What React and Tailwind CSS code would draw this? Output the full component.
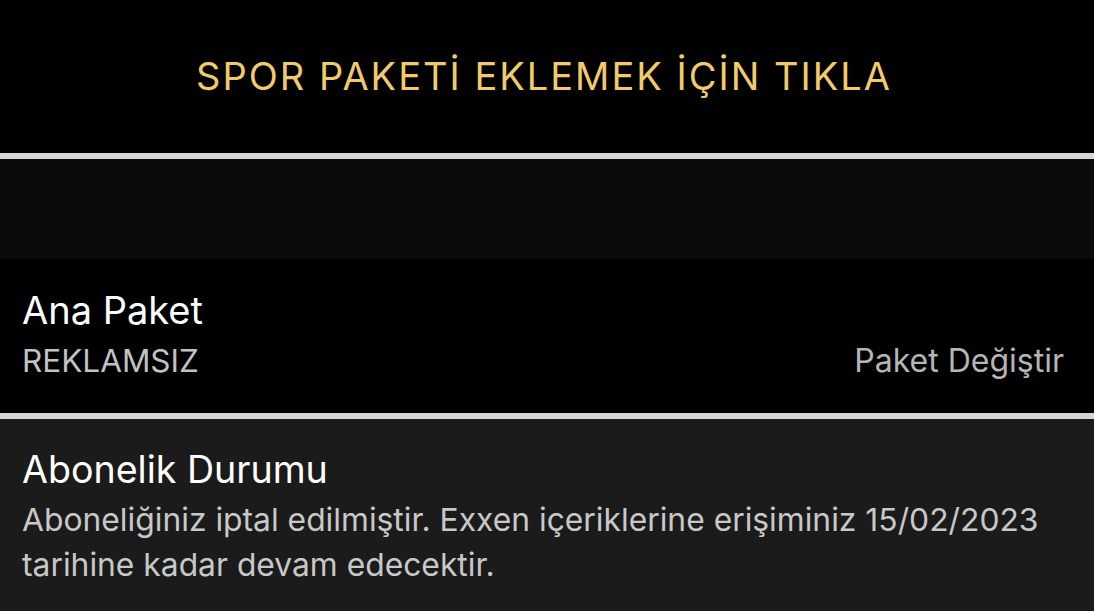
export default function App() {
  return (
    <div
      className="w-[1094px] h-[611px] overflow-hidden bg-black flex flex-col"
      style={{ fontFamily: 'Inter, "Noto Sans", sans-serif' }}
    >
      {/* Sport package banner */}
      <div className="h-[153px] flex items-center justify-center pr-[6px]">
        <span className="text-[38px] text-[#f1ca6c] tracking-[2px]">SPOR PAKETİ EKLEMEK İÇİN TIKLA</span>
      </div>
      <div className="h-[6px] bg-[#d6d6d6]" />
      <div className="h-[100px] bg-[#0b0b0b]" />

      {/* Main package */}
      <div className="h-[154px] bg-black px-[22px] pt-[26px]">
        <div className="text-[38px] leading-[50px] text-white">Ana Paket</div>
        <div className="flex items-center justify-between mt-[4px]">
          <span className="text-[31.5px] leading-[44px] text-[#c2c2c2]">REKLAMSIZ</span>
          <span className="text-[32px] leading-[44px] text-[#b5b5b5] pr-[8px]">Paket Değiştir</span>
        </div>
      </div>
      <div className="h-[6px] bg-[#d6d6d6]" />

      {/* Subscription status */}
      <div className="flex-1 bg-[#1b1b1b] px-[22px] pt-[26px]">
        <div className="text-[37.6px] leading-[50px] text-white">Abonelik Durumu</div>
        <p className="text-[31.8px] leading-[45px] text-[#c8c8c8] mt-[2px]">
          Aboneliğiniz iptal edilmiştir. Exxen içeriklerine erişiminiz 15/02/2023 tarihine kadar devam edecektir.
        </p>
      </div>
    </div>
  );
}
